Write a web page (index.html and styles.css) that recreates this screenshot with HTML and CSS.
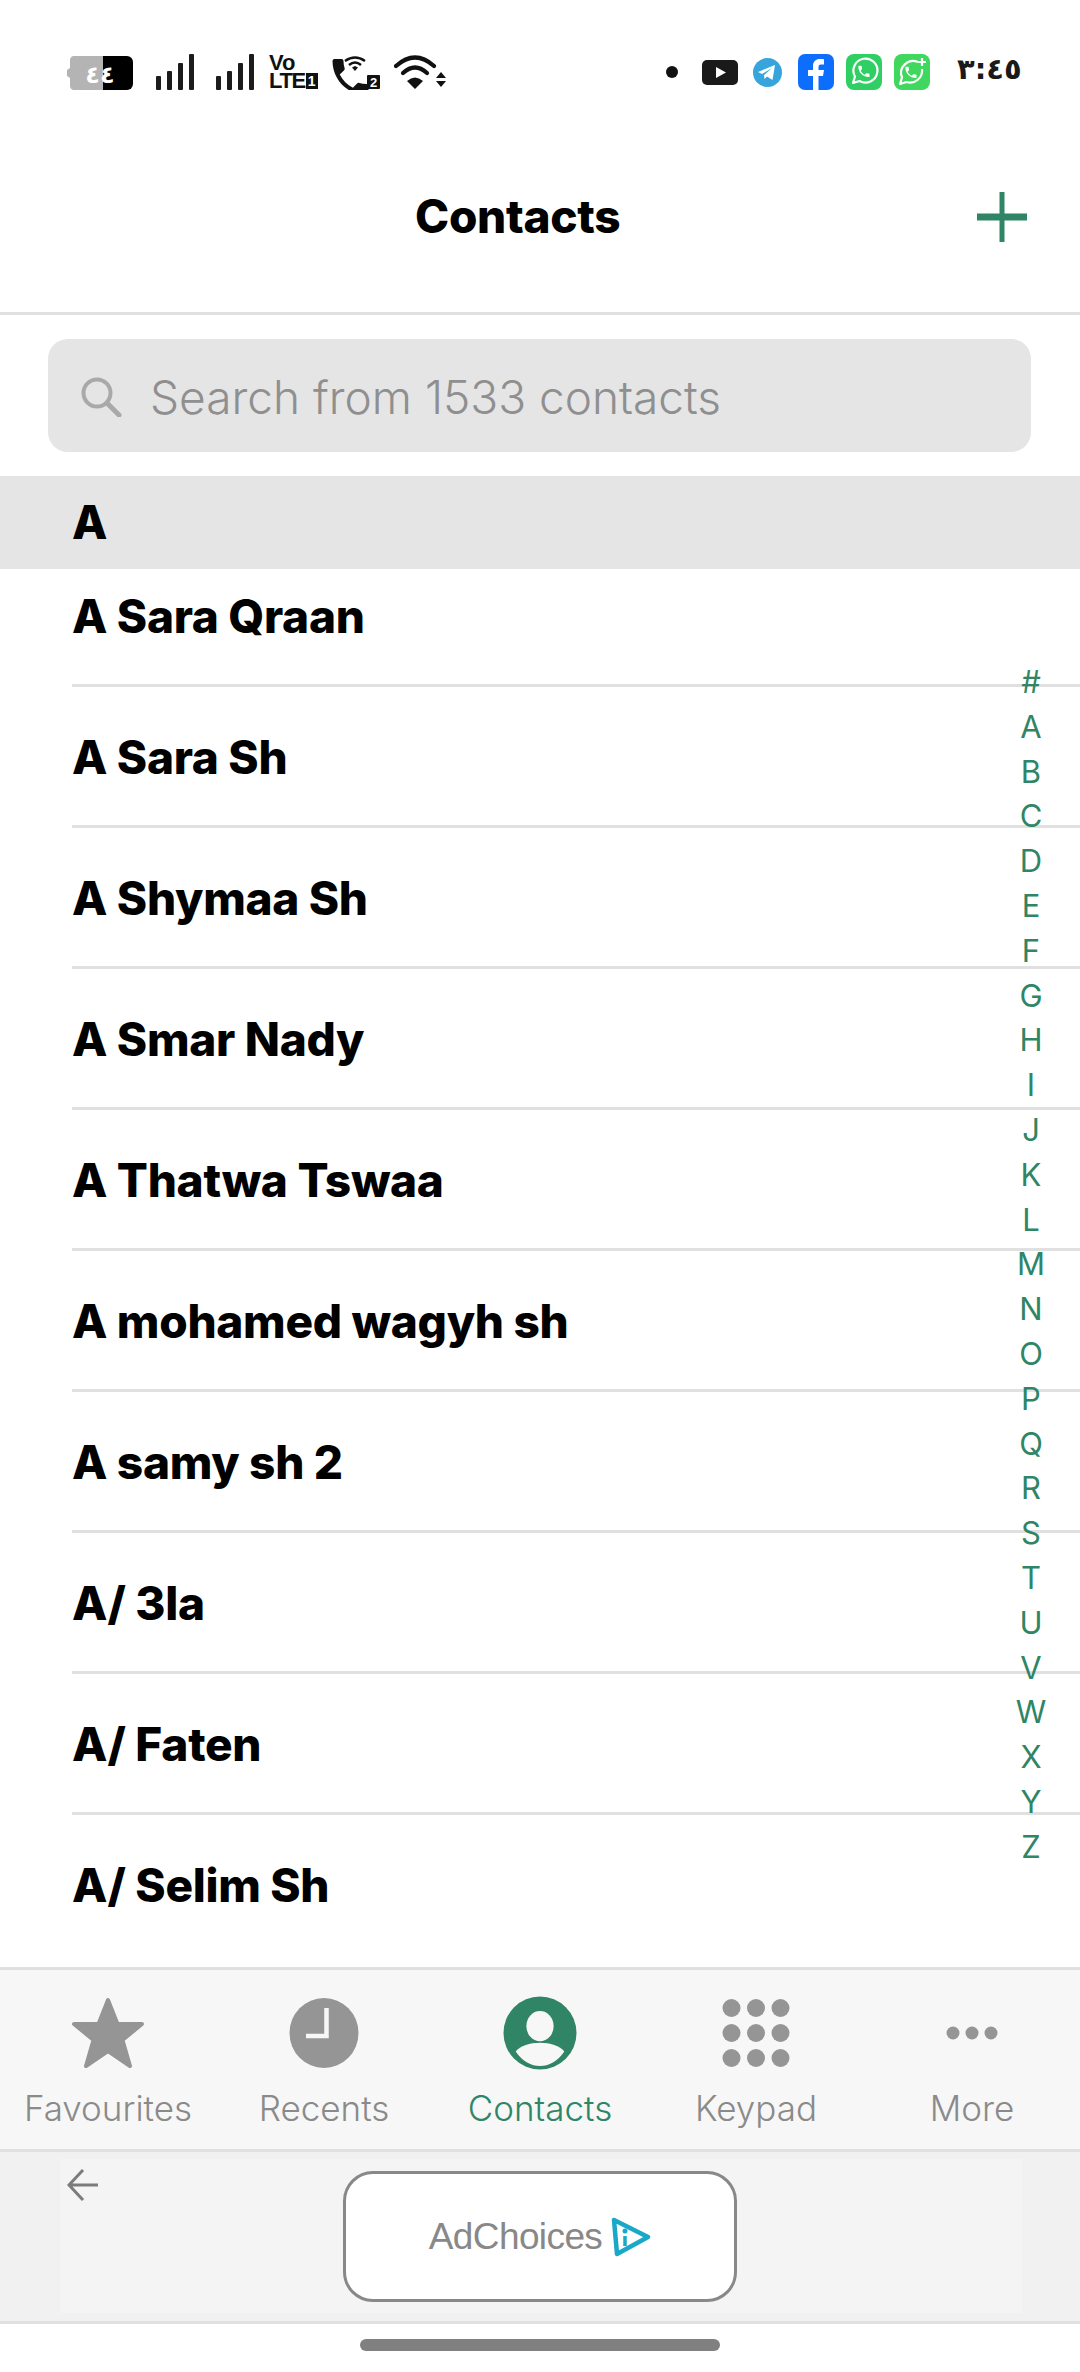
FILE: index.html
```html
<!DOCTYPE html>
<html lang="en">
<head>
    <meta charset="UTF-8">
    <meta name="viewport" content="width=device-width, initial-scale=1.0">
    <title>Contacts</title>
    <link rel="stylesheet" href="styles.css">
</head>
<body>

    <div class="status-bar">
        <div class="status-left">
            <svg class="ic-battery" width="66" height="34" viewBox="0 0 66 34">
                <path d="M6 0H36V34H6A5 5 0 0 1 3 29V22L0 20V14L3 12V5A5 5 0 0 1 6 0Z" fill="#b4b4b4"/>
                <path d="M36 0H60A6 6 0 0 1 66 6V28A6 6 0 0 1 60 34H36Z" fill="#000"/>
                <text class="battery-text" x="33" y="27" text-anchor="middle">٤٤</text>
            </svg>
            <svg class="ic-signal" width="38" height="36" viewBox="0 0 38 36"><g fill="#1c1c1c">
                <rect x="0" y="22" width="5" height="14" rx="1"/><rect x="11" y="17" width="5" height="19" rx="1"/>
                <rect x="22" y="9" width="5" height="27" rx="1"/><rect x="33" y="0" width="5" height="36" rx="1"/></g></svg>
            <svg class="ic-signal" width="38" height="36" viewBox="0 0 38 36"><g fill="#1c1c1c">
                <rect x="0" y="22" width="5" height="14" rx="1"/><rect x="11" y="17" width="5" height="19" rx="1"/>
                <rect x="22" y="9" width="5" height="27" rx="1"/><rect x="33" y="0" width="5" height="36" rx="1"/></g></svg>
            <div class="volte"><span class="vo">Vo</span><span class="lte">LTE<b>1</b></span></div>
            <svg class="ic-call" width="50" height="36" viewBox="0 0 50 36">
                <path transform="translate(-3.5 -1) scale(2)" d="M6.62 10.79c1.44 2.83 3.76 5.14 6.59 6.59l2.2-2.2c.27-.27.67-.36 1.02-.24 1.12.37 2.33.57 3.57.57.55 0 1 .45 1 1V20c0 .55-.45 1-1 1-9.39 0-17-7.61-17-17 0-.55.45-1 1-1h3.5c.55 0 1 .45 1 1 0 1.25.2 2.45.57 3.57.11.35.03.74-.25 1.02l-2.2 2.2z" fill="#111"/>
                <path d="M15 7Q25 0 35 7M19 11Q25 6 31 11" fill="none" stroke="#111" stroke-width="2.4"/>
                <path d="M22 13.500L25 12L28 13.500L25 17Z" fill="#111"/>
                <rect x="37" y="21" width="13" height="14" rx="1" fill="#111"/>
                <text class="call-num" x="43.5" y="33" text-anchor="middle">2</text>
            </svg>
            <svg class="ic-wifi" width="52" height="36" viewBox="0 0 52 36">
                <g fill="none" stroke="#111" stroke-width="4.2" stroke-linecap="round">
                    <path d="M2 12Q21 -5 40 12"/><path d="M9 19Q21 8 33 19"/>
                </g>
                <path d="M13 27Q21 20 29 27L21 35Z" fill="#111"/>
                <path d="M42 24L47 18L52 24ZM42 27H52L47 33Z" fill="#111"/>
            </svg>
        </div>
        <div class="status-right">
            <span class="dot"></span>
            <svg width="36" height="25" viewBox="0 0 36 25">
                <rect width="36" height="25" rx="5" fill="#1a1a1a"/><path d="M14 7L24 12.5L14 18Z" fill="#fff"/>
            </svg>
            <svg width="29" height="29" viewBox="0 0 29 29">
                <circle cx="14.5" cy="14.5" r="14.5" fill="#37a4dc"/>
                <path d="M5 14L22 7L19.5 22L14 18.5L11.5 21L11 17L19 10L9 16Z" fill="#fff"/>
            </svg>
            <svg width="36" height="36" viewBox="0 0 36 36">
                <rect width="36" height="36" rx="7" fill="#0d6efd"/>
                <path d="M15 36V22H10V16H15V12C15 7.5 18 5 22 5C24 5 25.500 5.200 26 5.300V10.500H23C21 10.500 20.500 11.500 20.500 13V16H26L25 22H20.500V36Z" fill="#fff"/>
            </svg>
            <svg width="36" height="36" viewBox="0 0 36 36">
                <rect width="36" height="36" rx="8" fill="#30cf63"/>
                <path d="M7 29L9 22.500A12 12 0 1 1 13.500 27Z" fill="none" stroke="#fff" stroke-width="2.200" stroke-linejoin="round"/>
                <path transform="translate(10.500 10) scale(.62)" d="M6.62 10.79c1.44 2.83 3.76 5.14 6.59 6.59l2.2-2.2c.27-.27.67-.36 1.02-.24 1.12.37 2.33.57 3.57.57.55 0 1 .45 1 1V20c0 .55-.45 1-1 1-9.39 0-17-7.61-17-17 0-.55.45-1 1-1h3.5c.55 0 1 .45 1 1 0 1.25.2 2.45.57 3.57.11.35.03.74-.25 1.02l-2.2 2.2z" fill="#fff"/>
            </svg>
            <svg width="36" height="36" viewBox="0 0 36 36">
                <rect width="36" height="36" rx="8" fill="#3fd75e"/>
                <path d="M24 8A12 12 0 0 0 8 23.500L6 30L12.500 28A12 12 0 0 0 28 15" fill="none" stroke="#fff" stroke-width="2.200" stroke-linejoin="round"/>
                <path transform="translate(9.500 11) scale(.62)" d="M6.62 10.79c1.44 2.83 3.76 5.14 6.59 6.59l2.2-2.2c.27-.27.67-.36 1.02-.24 1.12.37 2.33.57 3.57.57.55 0 1 .45 1 1V20c0 .55-.45 1-1 1-9.39 0-17-7.61-17-17 0-.55.45-1 1-1h3.5c.55 0 1 .45 1 1 0 1.25.2 2.45.57 3.57.11.35.03.74-.25 1.02l-2.2 2.2z" fill="#fff"/>
                <path d="M28 4V12M24 8H32" stroke="#fff" stroke-width="2.200"/>
            </svg>
            <span class="time">٣:٤٥</span>
        </div>
    </div>

    <header class="top-bar">
        <h1 class="title">Contacts</h1>
        <svg class="add-btn" width="50" height="50" viewBox="0 0 50 50">
            <path d="M22.500 0H27.500V21.500H50V28.500H27.500V50H22.500V28.500H0V21.500H22.500Z" fill="#2f8565"/>
        </svg>
    </header>

    <div class="search-wrap">
        <div class="search-box">
            <svg width="42" height="40" viewBox="0 0 42 40">
                <circle cx="17" cy="16" r="13.500" fill="none" stroke="#a9a9a9" stroke-width="4"/>
                <path d="M27 26L39 38" stroke="#a9a9a9" stroke-width="5" stroke-linecap="round"/>
            </svg>
            <span class="search-text">Search from 1533 contacts</span>
        </div>
    </div>

    <div class="section-head">A</div>

    <ul class="contact-list">
        <li>A Sara Qraan</li>
        <li>A Sara Sh</li>
        <li>A Shymaa Sh</li>
        <li>A Smar Nady</li>
        <li>A Thatwa Tswaa</li>
        <li>A mohamed wagyh sh</li>
        <li>A samy sh 2</li>
        <li>A/ 3la</li>
        <li>A/ Faten</li>
        <li>A/ Selim Sh</li>
    </ul>

    <div class="alpha-index">
        <span>#</span><span>A</span><span>B</span><span>C</span><span>D</span><span>E</span><span>F</span><span>G</span><span>H</span>
        <span>I</span><span>J</span><span>K</span><span>L</span><span>M</span><span>N</span><span>O</span><span>P</span><span>Q</span>
        <span>R</span><span>S</span><span>T</span><span>U</span><span>V</span><span>W</span><span>X</span><span>Y</span><span>Z</span>
    </div>

    <nav class="tab-bar">
        <div class="tab">
            <svg width="76" height="74" viewBox="0 0 76 74">
                <path d="M38 4L47.500 28H72L52.500 44L60 70L38 55L16 70L23.500 44L4 28H28.500Z" fill="#959595" stroke="#959595" stroke-width="4" stroke-linejoin="round"/>
            </svg>
            <span>Favourites</span>
        </div>
        <div class="tab">
            <svg width="76" height="74" viewBox="0 0 76 74">
                <ellipse cx="38" cy="37" rx="34.500" ry="35" fill="#959595"/>
                <path d="M40.500 12V40H20" fill="none" stroke="#f7f7f7" stroke-width="4.500"/>
            </svg>
            <span>Recents</span>
        </div>
        <div class="tab active">
            <svg width="76" height="74" viewBox="0 0 76 76">
                <circle cx="38" cy="38" r="37.500" fill="#2f8565"/>
                <ellipse cx="38" cy="31" rx="14" ry="15.500" fill="#f7f7f7"/>
                <path d="M13 57C22 45 54 45 63 57C56 67 47 72 38 72C29 72 20 67 13 57Z" fill="#f7f7f7"/>
            </svg>
            <span>Contacts</span>
        </div>
        <div class="tab">
            <svg width="76" height="74" viewBox="0 0 76 74"><g fill="#959595">
                <circle cx="13.500" cy="12" r="9"/><circle cx="38" cy="12" r="9"/><circle cx="62.500" cy="12" r="9"/>
                <circle cx="13.500" cy="37" r="9"/><circle cx="38" cy="37" r="9"/><circle cx="62.500" cy="37" r="9"/>
                <circle cx="13.500" cy="62" r="9"/><circle cx="38" cy="62" r="9"/><circle cx="62.500" cy="62" r="9"/></g></svg>
            <span>Keypad</span>
        </div>
        <div class="tab">
            <svg width="76" height="74" viewBox="0 0 76 74"><g fill="#959595">
                <circle cx="19" cy="37" r="6.500"/><circle cx="38" cy="37" r="6.500"/><circle cx="57" cy="37" r="6.500"/></g></svg>
            <span>More</span>
        </div>
    </nav>

    <div class="ad-bar">
        <svg class="ad-back" width="32" height="32" viewBox="0 0 32 32">
            <path d="M16 1L2 16L16 31M2 16H31" fill="none" stroke="#7c7c7c" stroke-width="3"/>
        </svg>
        <div class="ad-inner">
            <div class="ad-button">
                <span class="ad-text">AdChoices</span>
                <svg width="40" height="40" viewBox="0 0 40 40">
                    <path d="M3 3L37 20L6 37Z" fill="none" stroke="#19a8c8" stroke-width="4.500" stroke-linejoin="round"/>
                    <circle cx="14" cy="14" r="2.500" fill="#19a8c8"/>
                    <path d="M14 19V29" stroke="#19a8c8" stroke-width="3.500"/>
                </svg>
            </div>
        </div>
    </div>

    <div class="home-area"><div class="home-bar"></div></div>

</body>
</html>
```

FILE: styles.css
```css
* {
    box-sizing: border-box;
}
body {
    margin: 0;
    width: 1080px;
    height: 2372px;
    overflow: hidden;
    position: relative;
    background-color: #fff;
    font-family: Inter, "Liberation Sans", sans-serif;
}

/* status bar */
.status-bar {
    height: 120px;
    padding: 54px 62px 0 67px;
    display: flex;
    justify-content: space-between;
    align-items: flex-start;
}
.status-left, .status-right {
    display: flex;
    align-items: flex-start;
}
.status-right {
    align-items: center;
    height: 36px;
}
.status-left svg {
    display: block;
    flex: none;
}
.ic-battery {
    margin: 2px 23px 0 0;
}
.ic-signal {
    margin-right: 22px;
}
.ic-signal + .volte {
    margin-left: -7px;
}
.battery-text {
    font-family: "DejaVu Sans", sans-serif;
    font-size: 24px;
    font-weight: 700;
    fill: #fff;
}
.call-num {
    font-family: "Liberation Sans", sans-serif;
    font-size: 13px;
    font-weight: 700;
    fill: #fff;
}
.volte {
    width: 47px;
    height: 36px;
    margin-right: 14px;
    display: flex;
    flex-direction: column;
    font-family: "Liberation Sans", sans-serif;
    font-weight: 700;
    color: #111;
    white-space: nowrap;
}
.vo {
    font-size: 22px;
    line-height: 18px;
}
.lte {
    font-size: 22px;
    line-height: 18px;
    letter-spacing: -1.4px;
}
.lte b {
    color: #fff;
    background-color: #111;
    font-size: 14px;
    letter-spacing: 0;
    padding: 0 2px;
    margin-left: 1px;
    vertical-align: 2px;
}
.ic-call {
    margin-right: 14px;
}
.dot {
    width: 12px;
    height: 12px;
    border-radius: 50%;
    background-color: #111;
    margin-right: 24px;
}
.status-right svg {
    margin-right: 15px;
    flex: none;
}
.status-right svg:nth-of-type(3), .status-right svg:nth-of-type(4) {
    margin-right: 12px;
}
.status-right svg:nth-of-type(2) {
    margin-right: 16px;
}
.status-right svg:nth-of-type(5) {
    margin-right: 27px;
}
.time {
    font-family: "DejaVu Sans", sans-serif;
    font-size: 29px;
    font-weight: 700;
    letter-spacing: -.6px;
    color: #1a1a1a;
    line-height: 36px;
    width: 61px;
    white-space: nowrap;
    margin-top: -6px;
}

/* header */
.top-bar {
    height: 195px;
    padding: 72px 53px 0 415px;
    display: flex;
    justify-content: space-between;
    align-items: flex-start;
    border-bottom: 3px solid #e0e0e0;
}
.title {
    margin: 0;
    font-size: 46px;
    line-height: 48px;
    font-weight: 800;
    letter-spacing: -.3px;
    color: #000;
}

/* search */
.search-wrap {
    padding: 24px 49px 24px 48px;
}
.search-box {
    height: 113px;
    background-color: #e5e5e5;
    border-radius: 20px;
    padding: 2px 0 0 32px;
    display: flex;
    align-items: center;
    gap: 28px;
}
.search-text {
    font-size: 46px;
    font-weight: 300;
    color: #8f8f8f;
    white-space: nowrap;
}

/* list */
.section-head {
    position: relative;
    z-index: 1;
    height: 93px;
    padding-left: 72px;
    background-color: #e5e5e5;
    font-size: 46px;
    font-weight: 800;
    line-height: 93px;
    color: #000;
}
.contact-list {
    list-style: none;
    margin: -23px 0 0;
    padding: 0 0 0 72px;
}
.contact-list li {
    height: 141px;
    padding-top: 1px;
    border-bottom: 3px solid #e0e0e0;
    font-size: 46px;
    font-weight: 800;
    letter-spacing: -.3px;
    line-height: 138px;
    color: #000;
    white-space: nowrap;
}
.contact-list li:last-child {
    border-bottom: none;
}
.alpha-index {
    position: absolute;
    top: 660px;
    right: 19px;
    width: 60px;
    display: flex;
    flex-direction: column;
    align-items: center;
    font-size: 31px;
    line-height: 44.8px;
    color: #2f8565;
}

/* tabs */
.tab-bar {
    position: absolute;
    top: 1967px;
    left: 0;
    width: 1080px;
    height: 185px;
    padding-top: 26px;
    display: grid;
    grid-template-columns: repeat(5, 1fr);
    background-color: #f7f7f7;
    border-top: 3px solid #e0e0e0;
    border-bottom: 3px solid #e0e0e0;
}
.tab {
    display: flex;
    flex-direction: column;
    align-items: center;
    font-size: 35px;
    font-weight: 300;
    color: #8a8a8a;
}
.tab svg {
    display: block;
}
.tab span {
    margin-top: 16px;
    line-height: 44px;
}
.tab.active {
    color: #2f8565;
}

/* ad */
.ad-bar {
    position: absolute;
    top: 2152px;
    left: 0;
    width: 1080px;
    height: 172px;
    padding: 7px 58px 8px 60px;
    background-color: #f1f1f1;
    border-bottom: 3px solid #e0e0e0;
}
.ad-inner {
    height: 154px;
    background-color: #f4f4f4;
    padding: 12px 0 0 283px;
}
.ad-back {
    position: absolute;
    top: 17px;
    left: 67px;
}
.ad-button {
    width: 394px;
    height: 131px;
    background-color: #fff;
    border: 3px solid #888;
    border-radius: 30px;
    display: flex;
    align-items: center;
    justify-content: center;
    gap: 9px;
}
.ad-text {
    font-family: "Liberation Sans", sans-serif;
    font-size: 37px;
    letter-spacing: -.6px;
    color: #888;
}
.home-area {
    position: absolute;
    top: 2339px;
    left: 360px;
}
.home-bar {
    width: 360px;
    height: 12px;
    border-radius: 6px;
    background-color: #808080;
}
```
